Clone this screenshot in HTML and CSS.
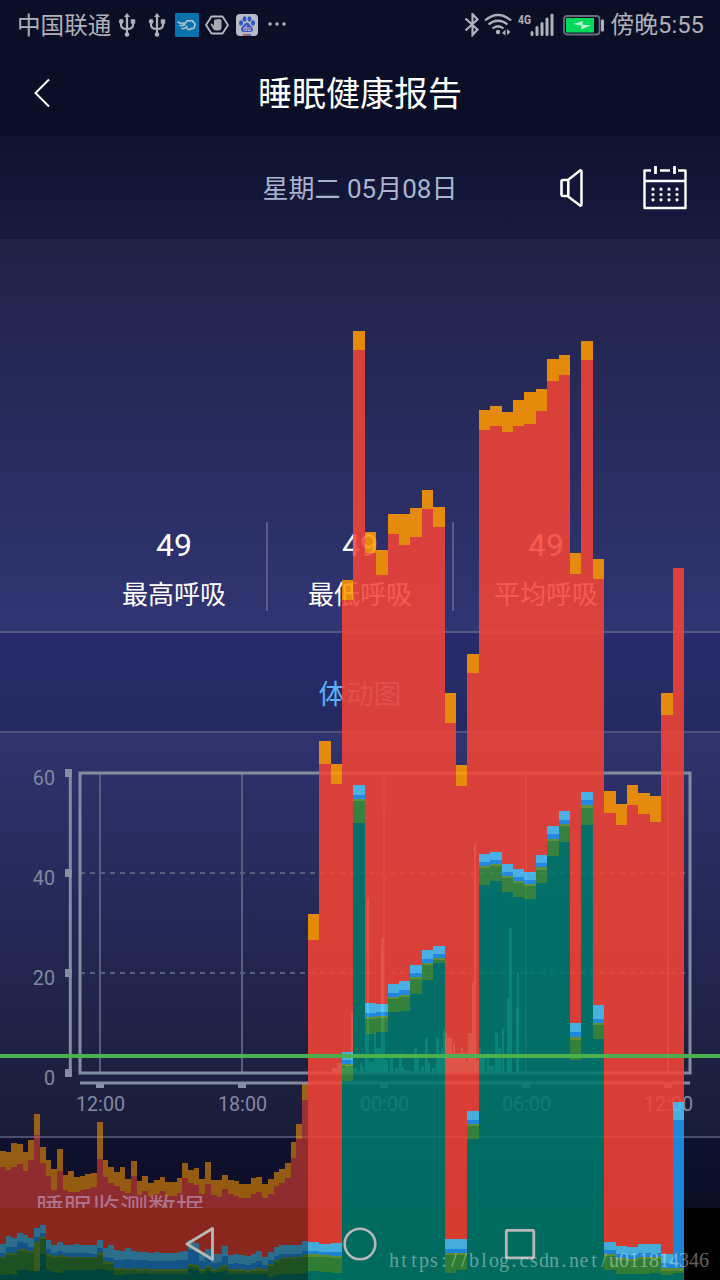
FILE: index.html
```html
<!DOCTYPE html>
<html lang="zh-CN">
	<head>
		<meta charset="utf-8">
		<title>睡眠健康报告</title>
		<link rel="stylesheet" href="styles.css">
	</head>
	<body>
		<div class="screen">
			<div class="statusbar">
				<span class="carrier">中国联通</span>
				<div class="notices">
					<svg viewBox="0 0 30 24"><use href="#usb"/></svg>
					<svg viewBox="0 0 30 24"><use href="#usb"/></svg>
					<svg viewBox="0 0 30 24">
						<rect x="3" width="24" height="24" rx="1" fill="#0872ae"/>
						<path d="M6 9q4 2.500 8 .5M8 12.500q3 .5 5-1M10 15.500q3 .5 5-2M14 9.500q1.500-3 4-1.500q3-1 3.500 1.500q2.500 1 1 3.500q0 3-3 2.500q-2.500 2-4.500 0" fill="none" stroke="#a9bccb" stroke-width="1.700" stroke-linecap="round"/>
					</svg>
					<svg viewBox="0 0 30 24">
						<path d="M9.500 3.500h11l5.500 8.500l-5.500 8.500h-11l-5.500-8.500z" fill="none" stroke="#b8b9c1" stroke-width="1.800" stroke-linejoin="round"/>
						<path d="M12 7.500q1-2 2-.5q1-2 2-.5q1-1.500 2 0q1.500-1 1.500 1v7q0 3-3 3h-2q-3 0-4.500-3.500l-1.500-3q1-1 2.500 .5l1 1z" fill="#a7a8b1"/>
					</svg>
					<svg viewBox="0 0 30 24">
						<rect x="4" y="1" width="22" height="22" rx="4" fill="#b9bac6"/>
						<g fill="#2f55cd">
							<ellipse cx="9" cy="10" rx="2" ry="2.700"/>
							<ellipse cx="12.500" cy="6" rx="2" ry="2.700"/>
							<ellipse cx="17.500" cy="6" rx="2" ry="2.700"/>
							<ellipse cx="21" cy="10" rx="2" ry="2.700"/>
							<path d="M15 9.500q2 0 3 2.500q3 2 3 4q0 3-3 3h-6q-3 0-3-3q0-2 3-4q1-2.500 3-2.500z"/>
						</g>
						<text class="du" x="15" y="17.500">du</text>
						<path d="M11 22h4" stroke="#c8403c" stroke-width="1.500"/>
						<path d="M15 22h4" stroke="#2f55cd" stroke-width="1.500"/>
					</svg>
					<svg viewBox="0 0 30 24">
						<g fill="#b0b1ba">
							<circle cx="8" cy="11" r="1.800"/><circle cx="15" cy="11" r="1.800"/><circle cx="22" cy="11" r="1.800"/>
						</g>
					</svg>
				</div>
				<div class="system">
					<svg class="bluetooth" viewBox="0 0 20 24">
						<path d="M3.500 5.500l12 11l-5 5.500v-21l5 5.500l-12 11" fill="none" stroke="#b0b1ba" stroke-width="2.200"/>
					</svg>
					<svg class="wifi" viewBox="0 0 30 24">
						<g fill="none" stroke="#b0b1ba" stroke-width="2.200">
							<path d="M2 7.500q13-11 26 0M5.500 11.500q9.500-7.500 19 0M9.500 15.500q5.500-4.500 11 0"/>
						</g>
						<circle cx="15" cy="19" r="2.200" fill="#b0b1ba"/>
						<path d="M19 20l3.500-3.500v6zM24 16v6l3.500-3z" fill="#b0b1ba"/>
					</svg>
					<svg class="signal" viewBox="0 0 38 24">
						<text class="net" x="2" y="10.500" textLength="13" lengthAdjust="spacingAndGlyphs">4G</text>
						<path d="M16 19.500v2M21 14.500v7M26 10.500v11M31 6v15.500M36 2v19.500" stroke="#b0b1ba" stroke-width="3" stroke-linecap="round"/>
					</svg>
					<svg class="battery" viewBox="0 0 42 24">
						<rect x="1" y="3" width="35.500" height="18.500" rx="3" fill="none" stroke="#6b6d7b" stroke-width="1.800"/>
						<rect x="3" y="5" width="28" height="14.500" fill="#00d95a"/>
						<path d="M10 11l10-3l-.5 3.500l8.500 1l-10 4l.5-4z" fill="#b9efce"/>
						<rect x="38" y="6.500" width="3" height="12" rx="1" fill="#b0b1ba"/>
					</svg>
					<span class="time">傍晚5:55</span>
				</div>
			</div>

			<div class="titlebar">
				<svg class="back" viewBox="0 0 18 30"><path d="M16 1.500l-13.500 13.500l13.500 13.500" fill="none" stroke="#fff" stroke-width="2"/></svg>
				<h1>睡眠健康报告</h1>
			</div>

			<div class="datebar">
				<span class="date">星期二 05月08日</span>
				<div class="tools">
					<svg class="speaker" viewBox="0 0 24 38">
						<path d="M8 11l12-9.500q1.500-.5 1.500 1v33q0 1.500-1.500 1l-12-9" fill="none" stroke="#fff" stroke-width="2.500"/>
						<rect x="1.500" y="11" width="6.800" height="16" rx="1.500" fill="none" stroke="#fff" stroke-width="2.600"/>
					</svg>
					<svg class="calendar" viewBox="0 0 44 44">
						<path d="M8 4.500h-6.500v37.500h41v-37.500h-7.500M17 4.500h10M1 15h42" fill="none" stroke="#fff" stroke-width="2.400" stroke-linejoin="round"/>
						<path d="M12.500 0v8M31.500 0v8" stroke="#fff" stroke-width="2.800"/>
						<g stroke="#fff" stroke-width="3.200" stroke-linecap="round" stroke-dasharray="0 8">
							<path d="M10 23.200h25M10 28.500h25M10 33.800h25"/>
						</g>
					</svg>
				</div>
			</div>

			<div class="breath">
				<div class="stat"><b>49</b><span>最高呼吸</span></div>
				<div class="stat"><b>49</b><span>最低呼吸</span></div>
				<div class="stat"><b>49</b><span>平均呼吸</span></div>
			</div>

			<h2 class="section-title">体动图</h2>

			<div class="motion">
				<svg id="motion-chart" viewBox="0 733 720 403">
					<g id="grid" class="grid"></g>
					<g id="motion-bars" class="motion-bars"></g>
					<g class="axis">
						<rect x="80" y="773" width="610" height="300"/>
						<path d="M70.300 769v308M80 1083h610"/>
					</g>
					<g id="ticks" class="ticks"></g>
					<g id="labels" class="labels"></g>
				</svg>
			</div>

			<div class="data-head">睡眠监测数据</div>

			<div class="navbar">
				<svg viewBox="0 0 32 34"><path d="M3 17l25.500-15.500v31z" fill="none" stroke="#b8b8b8" stroke-width="2.800" stroke-linejoin="round"/></svg>
				<svg viewBox="0 0 34 34"><circle cx="17" cy="17" r="15.300" fill="none" stroke="#b8b8b8" stroke-width="2.600"/></svg>
				<svg viewBox="0 0 34 34"><rect x="3.300" y="3.300" width="27.500" height="27.500" rx="1" fill="none" stroke="#b8b8b8" stroke-width="2.800"/></svg>
			</div>

			<!-- frame time bars over the whole screen -->
			<svg id="profile" class="profile" viewBox="0 0 720 1280"></svg>
			<svg class="watermark" viewBox="0 0 330 30"><text id="mark" y="20"></text></svg>
		</div>

		<svg width="0" height="0" class="defs">
			<symbol id="usb" viewBox="0 0 30 24">
				<path d="M15 3v18M9 8v4q0 4 6 4q6 0 6-4v-4" fill="none" stroke="#b0b1ba" stroke-width="2.200"/>
				<path d="M15 0l3 4h-6z" fill="#b0b1ba"/>
				<circle cx="15" cy="21.500" r="2.300" fill="#b0b1ba"/>
				<circle cx="9.200" cy="8.500" r="2.400" fill="#b0b1ba"/>
				<rect x="18.800" y="6.300" width="4.400" height="4.400" fill="#b0b1ba"/>
			</symbol>
		</svg>

	<script>
		const NS = "http://www.w3.org/2000/svg";

		function add(parent, tag, attrs, text) {
			const el = document.createElementNS(NS, tag);
			for (const [key, value] of Object.entries(attrs)) {
				el.setAttribute(key, value);
			}
			if (text) {
				el.textContent = text;
			}
			parent.appendChild(el);
		}

		// axes of the motion chart
		const grid = document.getElementById("grid");
		const ticks = document.getElementById("ticks");
		const labels = document.getElementById("labels");

		["12:00", "18:00", "00:00", "06:00", "12:00"].forEach(function(hour, i) {
			const x = 100 + i * 142;
			add(grid, "path", { d: `M${x} 773v300` });
			add(ticks, "rect", { x: x - 4, y: 1083, width: 8, height: 5 });
			add(labels, "text", { x: x + 0.5, y: 1111, "text-anchor": "middle" }, hour);
		});

		[60, 40, 20, 0].forEach(function(value, i) {
			const y = 773 + i * 100;
			if (value === 40 || value === 20) {
				add(grid, "path", { d: `M80 ${y}h605`, "stroke-dasharray": "5 5" });
			}
			add(ticks, "rect", { x: 65, y: y - 4, width: 6.700, height: 8 });
			add(labels, "text", { x: 55, y: y + 12, "text-anchor": "end" }, String(value));
		});

		// x, top, width
		const motion = [
			[327, 1072, 5], [332, 1068, 5], [337, 1063, 5], [342, 1068, 3], [345, 1065, 6], [351, 1013, 2],
			[353, 1068, 4], [360, 1063, 2], [362, 1067, 2], [365, 1034, 2], [367, 898, 2], [369, 1062, 5],
			[374, 1033, 2], [376, 1048, 5], [381, 938, 3], [384, 1034, 1], [385, 1060, 3], [390, 1058, 3],
			[395, 1068, 3], [399, 1053, 3], [402, 1067, 2], [404, 1070, 6], [414, 1048, 3], [417, 1058, 2],
			[421, 1067, 3], [425, 1038, 3], [428, 1063, 2], [432, 1068, 3], [436, 1038, 3], [439, 1056, 2],
			[441, 1048, 2], [443, 1028, 2], [445, 1033, 2], [447, 1038, 5], [452, 1053, 1], [453, 1043, 2],
			[455, 1056, 2], [457, 1053, 4], [461, 1048, 2], [463, 1053, 3], [466, 1061, 2], [468, 1033, 4],
			[472, 983, 2], [474, 843, 2], [476, 1060, 3], [479, 1048, 2], [481, 1058, 4], [487, 1053, 2],
			[489, 1066, 5], [495, 1033, 3], [498, 1048, 3], [502, 1028, 2], [507, 998, 2], [509, 928, 3],
			[516, 1008, 1], [517, 973, 2]
		];
		const motionBars = document.getElementById("motion-bars");
		motion.forEach(function(m) {
			add(motionBars, "rect", { x: m[0], y: m[1], width: m[2], height: 1074 - m[1] });
		});

		// tops of each stage: orange, red, light blue, blue, olive, green, teal
		const colors = ["#ff9800", "#f44336", "#4fc3f7", "#2196f3", "#689f38", "#388e3c", "#00796b"];

		const small = [
			[71,87,164,173,177,178,195], [72,90,156,167,173,175,194], [63,87,158,167,173,175,195], [64,84,153,162,169,171,190],
			[72,91,155,163,169,172,190], [60,80,158,167,171,173,191], [34,55,148,157,162,191,191], [67,83,145,153,157,159,174],
			[80,96,160,169,174,176,190], [89,110,165,173,176,178,192], [69,91,162,171,175,177,193], [95,110,165,173,176,178,190],
			[91,112,165,173,177,178,190], [97,112,164,173,177,178,190], [96,110,165,173,177,178,190], [94,109,165,173,177,178,190],
			[93,107,165,174,177,178,190], [42,79,160,168,172,175,189], [80,97,168,177,181,184,190], [87,103,165,178,182,184,191],
			[92,106,170,180,188,190,195], [87,111,171,180,188,190,195], [99,113,168,179,189,191,194], [81,96,171,180,188,190,194],
			[101,115,172,180,189,191,194], [96,111,172,180,188,190,193], [103,116,173,181,189,191,194], [100,114,172,181,189,191,194],
			[97,111,173,181,189,191,194], [102,116,173,181,189,191,194], [102,116,173,181,189,191,194], [98,113,172,180,189,191,194],
			[83,98,171,180,189,191,194], [90,103,160,170,184,186,189], [88,105,163,172,185,187,190], [99,114,172,181,189,191,194],
			[82,104,169,177,186,188,191], [100,115,174,183,189,191,193], [100,117,174,182,187,189,192], [95,109,166,176,185,187,191],
			[100,114,175,184,189,191,194], [101,116,174,183,189,191,194], [104,118,175,184,189,191,194], [104,118,176,185,190,192,194],
			[98,114,174,183,189,191,194], [97,112,171,181,188,191,194], [104,118,177,185,189,191,194], [99,114,172,180,184,186,197],
			[92,106,167,176,180,182,195], [89,103,165,174,178,179,194], [83,98,165,174,177,178,194], [62,78,165,174,177,179,194],
			[44,59,165,174,177,178,194], [4,20,161,171,175,177,193]
		];

		const large = [
			[914,940,1242,1251,1254,1257,1271], [741,764,1244,1252,1255,1257,1272], [764,784,1243,1252,1256,1258,1273],
			[580,600,1052,1060,1064,1066,1081], [331,350,785,795,799,801,823], [532,553,1003,1013,1017,1019,1034],
			[550,575,1004,1012,1016,1018,1032], [514,534,984,993,997,999,1012], [514,545,981,990,995,997,1011],
			[508,537,965,973,977,979,994], [490,509,950,959,963,965,980], [507,527,946,954,958,960,963],
			[693,723,1239,1249,1253,1255,1273], [765,786,1239,1249,1253,1255,1270], [654,673,1111,1120,1124,1126,1139],
			[410,430,854,862,866,868,885], [406,426,852,860,864,866,881], [412,432,864,872,876,878,892],
			[400,426,869,877,881,883,897], [392,424,872,880,884,886,899], [389,411,855,863,867,870,883],
			[359,381,826,834,839,841,856], [355,375,811,820,824,826,842], [553,574,1023,1032,1037,1040,1060],
			[341,360,792,800,805,808,825], [559,579,1005,1019,1023,1025,1039], [791,813,1242,1250,1254,1256,1270],
			[804,825,1246,1254,1258,1260,1274], [785,805,1247,1255,1259,1261,1274], [793,814,1244,1253,1257,1259,1274],
			[796,822,1244,1253,1257,1259,1273], [693,715,1254,1263,1268,1271,1275], [568,568,1102,1120,1268,1271,1273]
		];

		const profile = document.getElementById("profile");

		function drawBars(rows, start, step, base, opacity) {
			rows.forEach(function(tops, i) {
				const x = Math.round(start + i * step - 0.01);
				const next = Math.round(start + (i + 1) * step - 0.01);
				tops.forEach(function(top, n) {
					const end = n < 6 ? base + tops[n + 1] : 1280;
					if (end > base + top) {
						add(profile, "rect", { x: x, y: base + top, width: next - x, height: end - base - top, fill: colors[n], "fill-opacity": opacity });
					}
				});
			});
		}

		// the small values are offsets in the bottom 200 px of the screen
		drawBars(small, 0, 5.7, 1080, 0.56);
		drawBars(large, 307.8, 11.4, 0, 0.874);
		add(profile, "rect", { x: 0, y: 1054, width: 720, height: 4, fill: "#4caf50" });

		// every character sits in a 10px cell
		const mark = document.getElementById("mark");
		"https://blog.csdn.net/u011814346".split("").forEach(function(c, i) {
			add(mark, "tspan", { x: 5 + i * 10 }, c);
		});
	</script>
	</body>
</html>
```

FILE: styles.css
```css
* {
	box-sizing: border-box;
}

body {
	margin: 0;
	background-color: black;
	color: white;
	font-family: Roboto, "Noto Sans CJK SC", sans-serif;
}

svg {
	display: block;
}

.defs {
	position: absolute;
}

.screen {
	position: relative;
	display: flex;
	flex-direction: column;
	width: 720px;
	height: 1280px;
	overflow: hidden;
}

.statusbar {
	display: flex;
	align-items: center;
	height: 50px;
	padding: 0 16px 0 17px;
	background-color: #0a0e27;
	color: #b0b1ba;
	font-size: 23.6px;
	line-height: 50px;
}

.carrier {
	width: 95px;
	padding-top: 1px;
	white-space: nowrap;
}

.notices {
	display: flex;
}

.notices svg {
	width: 30px;
	height: 24px;
}

.du {
	fill: #b9bac6;
	font-size: 7px;
	font-weight: bold;
	text-anchor: middle;
}

.system {
	display: flex;
	align-items: center;
	margin-left: auto;
}

.system svg {
	height: 24px;
}

.bluetooth {
	width: 20px;
}

.wifi {
	width: 30px;
	margin-left: 1px;
}

.signal {
	width: 38px;
	margin-left: 3px;
	overflow: visible;
}

.net {
	fill: #b0b1ba;
	font-size: 13px;
	font-weight: bold;
}

.battery {
	width: 42px;
	margin: 0 6px 0 9px;
}

.time {
	font-size: 23.8px;
	white-space: nowrap;
}

.titlebar {
	display: grid;
	grid-template-columns: 1fr auto 1fr;
	align-items: center;
	height: 86px;
	background-color: #0a0e27;
}

.back {
	width: 18px;
	height: 30px;
	margin-left: 33px;
}

.titlebar h1 {
	margin: 0;
	padding-top: 3px;
	font-size: 34px;
	font-weight: normal;
	line-height: 83px;
}

.datebar {
	display: grid;
	grid-template-columns: 1fr auto 1fr;
	align-items: center;
	height: 103px;
	background: linear-gradient(#101230, #17193f);
}

.date {
	grid-column: 2;
	padding-bottom: 2px;
	color: #a9b4cf;
	font-size: 26px;
}

.tools {
	display: flex;
	justify-content: flex-end;
	align-items: center;
	gap: 59px;
	padding-right: 33px;
}

.speaker {
	width: 24px;
	height: 38px;
}

.calendar {
	width: 44px;
	height: 44px;
}

.breath {
	display: flex;
	justify-content: center;
	align-items: flex-end;
	height: 394px;
	padding: 0 2px 20px 0;
	border-bottom: 2px solid #555a83;
	background: linear-gradient(#202246, #303574);
}

.stat {
	display: flex;
	flex-direction: column;
	align-items: center;
	width: 186px;
	height: 89px;
}

.stat:first-child {
	padding-left: 2px;
}

.stat + .stat {
	border-left: 2px solid #575c88;
}

.stat b {
	font-size: 32px;
	font-weight: normal;
	line-height: 46px;
}

.stat span {
	padding-top: 1px;
	font-size: 26px;
	line-height: 53px;
}

.section-title {
	height: 100px;
	margin: 0;
	border-bottom: 2px solid #4d527c;
	background: linear-gradient(#272b6b, #262a62);
	color: #5ab0f8;
	font-size: 27.6px;
	font-weight: normal;
	line-height: 124px;
	text-align: center;
}

.motion {
	height: 405px;
	border-bottom: 2px solid #4b4f6e;
	background: linear-gradient(#2f336f, #1a1c38);
}

.motion svg {
	width: 720px;
	height: 403px;
}

.grid {
	fill: none;
	stroke: #585e7d;
	stroke-width: 2;
}

.axis {
	fill: none;
	stroke: #828da2;
	stroke-width: 3;
}

.ticks {
	fill: #8590a4;
}

.labels {
	fill: #8089a0;
	font-size: 19.7px;
}

.motion-bars {
	fill: #48d6c4;
}

.data-head {
	height: 70px;
	padding-left: 36px;
	overflow: hidden;
	background: linear-gradient(#10112f, #0c0d25);
	color: #5ab0f8;
	font-size: 28px;
	line-height: 143px;
}

.navbar {
	display: grid;
	grid-template-columns: repeat(3, 160px);
	justify-content: center;
	justify-items: center;
	align-items: center;
	height: 72px;
}

.navbar svg {
	position: relative;
	z-index: 2;
	height: 34px;
}

.profile {
	position: absolute;
	top: 0;
	left: 0;
	z-index: 1;
	width: 720px;
	height: 1280px;
	shape-rendering: crispEdges;
}

.watermark {
	position: absolute;
	right: 1px;
	bottom: 3px;
	z-index: 3;
	width: 330px;
	height: 30px;
	fill: #ffffff;
	fill-opacity: .4;
	font-family: "Liberation Serif", serif;
	font-size: 20px;
	text-anchor: middle;
}
```
